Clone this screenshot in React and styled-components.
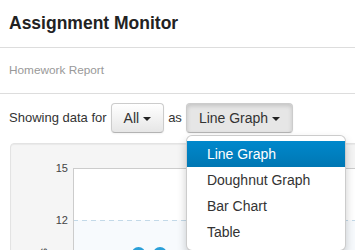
import React from "react";
import styled, { createGlobalStyle } from "styled-components";

const GlobalStyle = createGlobalStyle`
  html, body {
    margin: 0;
    padding: 0;
    overflow: hidden;
    background: #fff;
    font-family: "Liberation Sans", Arial, sans-serif;
    color: #333;
  }
`;

const Page = styled.div`
  width: 355px;
`;

const Header = styled.h1`
  margin: 0;
  box-sizing: border-box;
  height: 48px;
  padding: 13px 9px 0;
  border-bottom: 1px solid #ddd;
  font-size: 17.5px;
  font-weight: bold;
  line-height: normal;
  color: #222;
`;

const SubHeader = styled.div`
  box-sizing: border-box;
  height: 46px;
  padding: 15px 9px 0;
  border-bottom: 1px solid #ddd;
  font-size: 11.8px;
  line-height: normal;
  color: #999;
`;

const Toolbar = styled.div`
  display: flex;
  align-items: center;
  gap: 4px;
  padding: 9px 9px 10px;
  font-size: 13px;
  line-height: 20px;
  color: #333;
`;

const Label = styled.span`
  white-space: nowrap;
`;

const DropWrap = styled.div`
  position: relative;
`;

const Button = styled.button`
  display: inline-flex;
  align-items: center;
  height: 30px;
  padding: 4px 12px;
  box-sizing: border-box;
  font-family: inherit;
  font-size: 14px;
  line-height: 20px;
  color: #333;
  border: 1px solid #ccc;
  border-bottom-color: #b3b3b3;
  border-radius: 4px;
  background: ${(p) =>
    p.$open ? "#e6e6e6" : "linear-gradient(to bottom, #ffffff, #e6e6e6)"};
  box-shadow: ${(p) =>
    p.$open
      ? "inset 0 2px 4px rgba(0,0,0,0.15), 0 1px 2px rgba(0,0,0,0.05)"
      : "inset 0 1px 0 rgba(255,255,255,0.2), 0 1px 2px rgba(0,0,0,0.05)"};
  white-space: nowrap;
  cursor: pointer;
`;

const Caret = styled.span`
  display: inline-block;
  width: 0;
  height: 0;
  margin-left: 4px;
  margin-top: 1px;
  border-top: 4px solid #222;
  border-left: 4px solid transparent;
  border-right: 4px solid transparent;
`;

const Menu = styled.ul`
  position: absolute;
  top: 100%;
  left: 0;
  z-index: 10;
  margin: 2px 0 0;
  padding: 5px 0;
  width: 160px;
  box-sizing: border-box;
  list-style: none;
  background: #fff;
  border: 1px solid rgba(0, 0, 0, 0.2);
  border-radius: 6px;
  box-shadow: 0 5px 10px rgba(0, 0, 0, 0.2);
`;

const Item = styled.li`
  display: block;
  padding: 3px 20px;
  font-size: 14px;
  line-height: 20px;
  white-space: nowrap;
  color: ${(p) => (p.$active ? "#fff" : "#333")};
  background: ${(p) =>
    p.$active ? "linear-gradient(to bottom, #0088cc, #0077b3)" : "transparent"};
`;

const Well = styled.div`
  margin-left: 10px;
  width: 600px;
  height: 200px;
  background: #f5f5f5;
  border: 1px solid #e3e3e3;
  border-radius: 4px;
  box-shadow: inset 0 1px 1px rgba(0, 0, 0, 0.05);
`;

const ChartSvg = styled.svg`
  display: block;
  font-family: "Liberation Sans", Arial, sans-serif;
`;

function Chart() {
  const left = 62;
  const top = 24;
  return (
    <ChartSvg width="600" height="200" viewBox="0 0 600 200">
      <rect x={left} y={top} width="560" height="200" fill="#fff" />
      <rect x={left} y={top + 52} width="560" height="200" fill="#f7fafd" />
      <line x1={left} y1={top + 52.5} x2="600" y2={top + 52.5} stroke="#c3d9e8" strokeDasharray="5 4" />
      <line x1={left} y1={top + 0.5} x2="600" y2={top + 0.5} stroke="#ccc" />
      <line x1={left + 0.5} y1={top} x2={left + 0.5} y2="200" stroke="#ccc" />
      <text x="57" y={top + 4} fontSize="11" fill="#444" textAnchor="end">15</text>
      <text x="57" y={top + 56} fontSize="11" fill="#444" textAnchor="end">12</text>
      <text
        x="36"
        y="104"
        fontSize="11"
        fill="#444"
        textAnchor="end"
        transform="rotate(-90 36 104)"
      >
        Students
      </text>
      <circle cx="127.5" cy="110" r="7" fill="#2a9fd8" />
      <circle cx="149" cy="110" r="7" fill="#2a9fd8" />
    </ChartSvg>
  );
}

export default function App() {
  return (
    <Page>
      <GlobalStyle />
      <Header>Assignment Monitor</Header>
      <SubHeader>Homework Report</SubHeader>
      <Toolbar>
        <Label>Showing data for</Label>
        <Button>
          All
          <Caret />
        </Button>
        <Label>as</Label>
        <DropWrap>
          <Button $open>
            Line Graph
            <Caret />
          </Button>
          <Menu>
            <Item $active>Line Graph</Item>
            <Item>Doughnut Graph</Item>
            <Item>Bar Chart</Item>
            <Item>Table</Item>
          </Menu>
        </DropWrap>
      </Toolbar>
      <Well>
        <Chart />
      </Well>
    </Page>
  );
}
